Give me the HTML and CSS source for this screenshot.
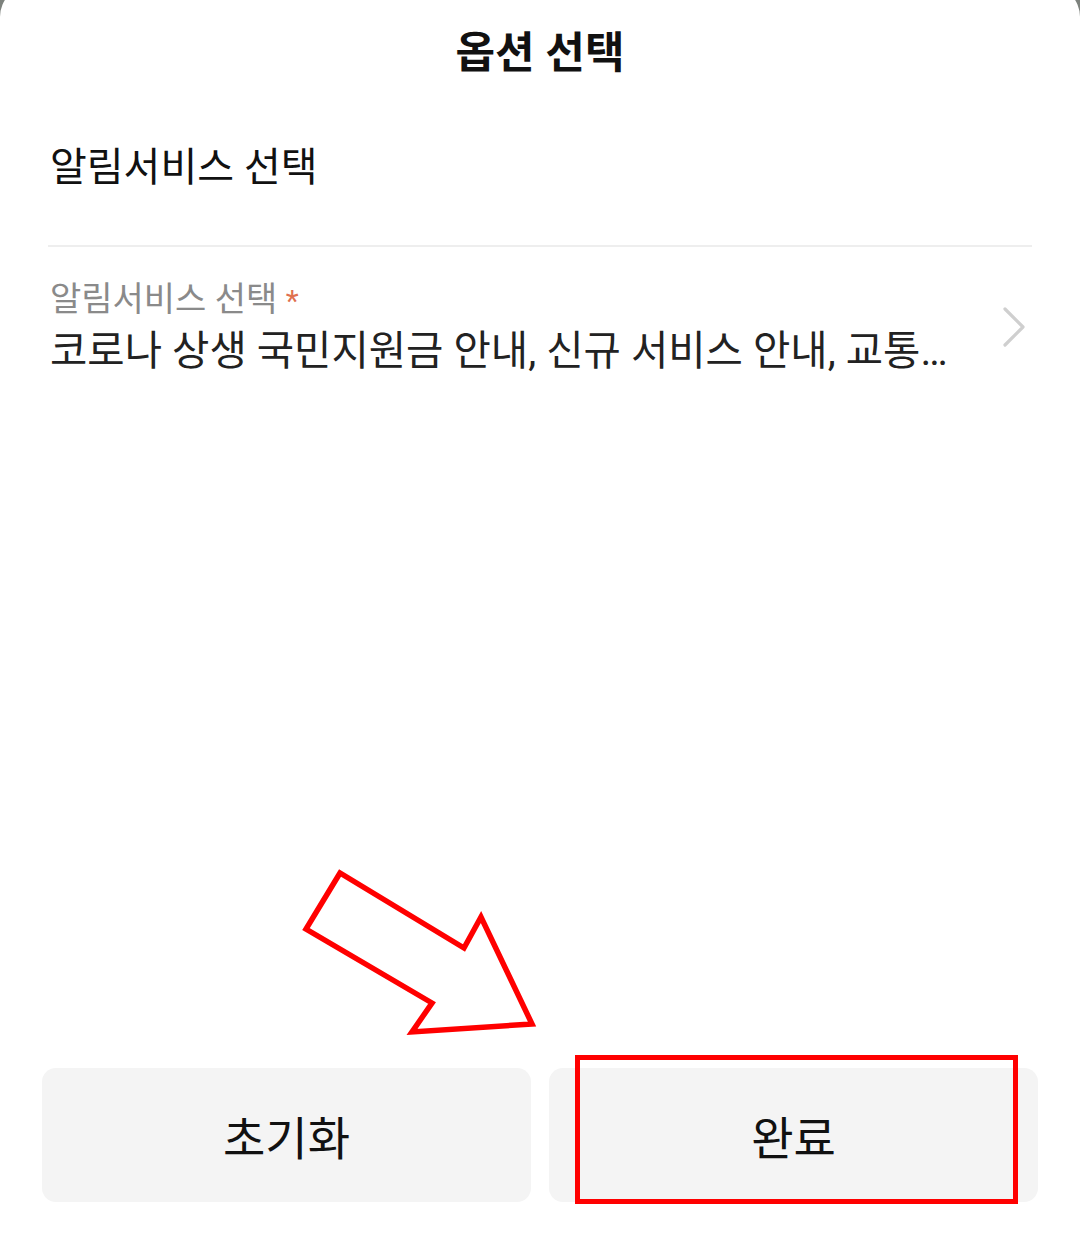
FILE: index.html
```html
<!DOCTYPE html>
<html lang="ko">
<head>
  <meta charset="UTF-8">
  <title>옵션 선택</title>
  <link rel="stylesheet" href="styles.css">
</head>
<body>
  <div class="sheet">
    <h2 class="sheet-title">옵션 선택</h2>

    <div class="section-title">알림서비스 선택</div>
    <div class="divider"></div>

    <div class="field">
      <div class="field-body">
        <div class="field-label">알림서비스 선택 <span class="required">*</span></div>
        <div class="field-value">코로나 상생 국민지원금 안내, 신규 서비스 안내, 교통정보 안내</div>
      </div>
      <svg class="chevron" width="26" height="40" viewBox="0 0 26 40">
        <polyline points="3,2 21,20 3,38" fill="none" stroke="#cfcfcf" stroke-width="3.2" stroke-linecap="round" stroke-linejoin="round"/>
      </svg>
    </div>

    <div class="spacer"></div>

    <div class="footer">
      <button class="btn">초기화</button>
      <button class="btn btn-done">완료<span class="mark-box"></span></button>
    </div>

    <!-- annotation arrow -->
    <svg class="mark-arrow" width="260" height="190" viewBox="290 860 260 190">
      <polygon points="340,873 306,929 432,1003 412,1032 532,1024 481,917 464,948" fill="none" stroke="#f00" stroke-width="5.5" stroke-linejoin="miter"/>
    </svg>
  </div>
</body>
</html>
```

FILE: styles.css
```css
body {
  margin: 0;
  background: #7d827d;
  font-family: Roboto, "Noto Sans CJK KR", sans-serif;
  overflow: hidden;
}
.sheet {
  position: relative;
  margin-top: -15px;
  min-height: calc(100vh + 15px);
  background: white;
  border-radius: 32px 32px 0 0;
  display: flex;
  flex-direction: column;
}
.sheet-title {
  margin: 0;
  padding-top: 18px;
  height: 100px;
  line-height: 100px;
  text-align: center;
  font-size: 43px;
  font-weight: 700;
  color: #111;
}
.section-title {
  padding: 35px 50px 0;
  line-height: 60px;
  font-size: 40px;
  color: #111;
}
.divider {
  height: 2px;
  margin: 47px 48px 0;
  background: #eeeeee;
}
.field {
  display: flex;
  align-items: center;
  padding: 30px 52px 0 50px;
  gap: 50px;
}
.field-body {
  flex: 1;
  min-width: 0;
}
.field-label {
  font-size: 34px;
  line-height: 44px;
  color: #8a8a8a;
}
.required {
  color: #e0704f;
  font-size: 30px;
}
.field-value {
  margin-top: 2px;
  font-size: 40.6px;
  line-height: 52px;
  color: #222;
  white-space: nowrap;
  overflow: hidden;
  text-overflow: ellipsis;
}
.chevron {
  flex: none;
}
.spacer {
  flex: 1;
}
.footer {
  display: flex;
  gap: 18px;
  padding: 0 42px 47px;
}
.btn {
  position: relative;
  flex: 1;
  height: 134px;
  border: none;
  border-radius: 14px;
  background: #f4f4f4;
  font-family: inherit;
  font-size: 46px;
  color: #111;
}
.mark-box {
  position: absolute;
  left: 26px;
  top: -13px;
  width: 443px;
  height: 149px;
  box-sizing: border-box;
  border: 5px solid #f00;
}
.mark-arrow {
  position: absolute;
  left: 290px;
  top: 875px;
}
```
